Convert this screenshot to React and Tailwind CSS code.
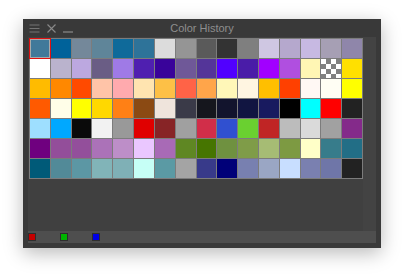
const rows = [
  ["#41799a", "#00629a", "#74889a", "#5f8599", "#0f6a9a", "#2e7399", "#dcdcdc", "#959595", "#5a5a5a", "#333333", "#7f7f7f", "#cfc7e2", "#b5a8cd", "#c7b9e2", "#a69fb4", "#8f86aa"],
  ["#ffffff", "#bab3cd", "#bca8e0", "#6a5d85", "#9f7ae6", "#4f1fb0", "#39039a", "#6f5898", "#543599", "#5100ff", "#4a1ca8", "#a100ff", "#b04fe0", "#fff6b4", "checker", "#ffe000"],
  ["#ffbb00", "#ff8800", "#ff4a00", "#ffc4a8", "#ffaaae", "#ffe4b0", "#fdc046", "#ff6347", "#ffa54a", "#fff7b8", "#fff5e1", "#ffbf00", "#ff4000", "#fff8f4", "#fffef4", "#ffff00"],
  ["#ff5a00", "#fffee8", "#ffff00", "#ffd800", "#ff8015", "#8b4a13", "#efe4dc", "#3a3a48", "#15161d", "#12142d", "#111541", "#181a5f", "#000000", "#00ffff", "#ff0000", "#222222"],
  ["#9edfff", "#00a8ff", "#0a0a0a", "#f2f2f2", "#999999", "#e00000", "#872426", "#a0a0a0", "#d12e49", "#3050d0", "#6ad030", "#c02525", "#bcbcbc", "#dadada", "#a1a1a1", "#842a8a"],
  ["#6f007f", "#934e9a", "#934f9b", "#ab72b8", "#bd8ec8", "#eac7ff", "#a86ab6", "#5f8723", "#467500", "#6f9140", "#7f9c48", "#a6bc74", "#7d9a42", "#ffffc8", "#377c8b", "#226e86"],
  ["#005a78", "#528a98", "#5c97a4", "#81b4b8", "#7fb0b6", "#c6fff6", "#5b9aa4", "#a4a4a4", "#383a8a", "#000078", "#7880b0", "#9aa6c4", "#c8deff", "#7a80b0", "#6f76a8", "#222222"],
];

function TitleIcons() {
  return (
    <div className="flex items-center gap-[7px] pl-[6px]">
      <svg width="11" height="9" viewBox="0 0 11 9" className="text-[#747474]">
        <path d="M0.5 1H10.5M0.5 4.5H10.5M0.5 8H10.5" stroke="currentColor" strokeWidth="1" />
      </svg>
      <svg width="9" height="9" viewBox="0 0 9 9" className="text-[#8a8a8a]">
        <path d="M0.5 0.5L8.5 8.5M8.5 0.5L0.5 8.5" stroke="currentColor" strokeWidth="1.1" />
      </svg>
      <svg width="10" height="9" viewBox="0 0 10 9" className="text-[#8a8a8a]">
        <path d="M0 8H10" stroke="currentColor" strokeWidth="1.2" />
      </svg>
    </div>
  );
}

function Swatch({ color, selected }) {
  if (color === "checker") {
    return (
      <div className="h-[19px] bg-[#ffffff] bg-[image:conic-gradient(#808080_25%,#ffffff_0_50%,#808080_0_75%,#ffffff_0)] bg-[length:10px_10px]" />
    );
  }
  if (selected) {
    return (
      <div className="relative h-[19px] shadow-[inset_0_0_0_1px_#a9a9a9]" style={{ backgroundColor: color }}>
        <div className="absolute -inset-px border border-[#e01010]" />
      </div>
    );
  }
  return <div className="h-[19px]" style={{ backgroundColor: color }} />;
}

export default function App() {
  return (
    <div className="min-h-screen w-full bg-white pl-[23px] pt-[19px] font-['Liberation_Sans',Arial,sans-serif]">
      <div className="w-[358px] h-[229px] bg-[#393939] flex flex-col shadow-[0_5px_18px_rgba(0,0,0,0.28)]">
        <div className="h-[18px] grid grid-cols-[1fr_auto_1fr] items-center">
          <TitleIcons />
          <span className="text-[11px] text-[#8e8e8e] leading-none">Color History</span>
          <div />
        </div>
        <div className="flex-1 flex flex-col px-[5px] pb-[5px]">
          <div className="flex-1 flex">
            <div className="flex-1 bg-[#404040] pl-px pt-px">
              <div className="grid grid-cols-16 gap-px p-px bg-[#7c7c7c] w-[334px]">
                {rows.map((row, r) =>
                  row.map((c, i) => <Swatch key={r + "-" + i} color={c} selected={r === 0 && i === 0} />)
                )}
              </div>
            </div>
            <div className="w-[13px] bg-[#434343]" />
          </div>
          <div className="h-[12px] bg-[#4e4e4e] flex items-center gap-[24px]">
            <div className="w-[8px] h-[8px] border border-[#2e2e2e] bg-[#c40000]" />
            <div className="w-[8px] h-[8px] border border-[#2e2e2e] bg-[#00b400]" />
            <div className="w-[8px] h-[8px] border border-[#2e2e2e] bg-[#0000e6]" />
          </div>
        </div>
      </div>
    </div>
  );
}
